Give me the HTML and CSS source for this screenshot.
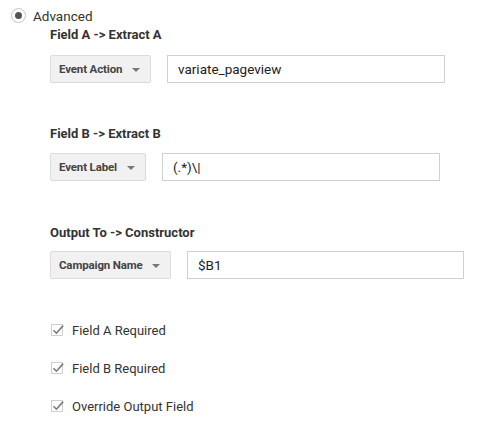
FILE: index.html
```html
<!DOCTYPE html>
<html>
<head>
<meta charset="utf-8">
<link rel="stylesheet" href="styles.css">
</head>
<body>
<div class="radio-row">
  <span class="radio"><span class="radio-dot"></span></span>
  <span class="radio-label">Advanced</span>
</div>
<div class="panel">
  <div class="group g1">
    <div class="heading">Field A -&gt; Extract A</div>
    <div class="field-row">
      <div class="select w1"><span class="select-text">Event Action</span><span class="caret"></span></div>
      <div class="input i1">variate_pageview</div>
    </div>
  </div>
  <div class="group g2">
    <div class="heading">Field B -&gt; Extract B</div>
    <div class="field-row">
      <div class="select w2"><span class="select-text">Event Label</span><span class="caret"></span></div>
      <div class="input i2">(.*)\|</div>
    </div>
  </div>
  <div class="group g3">
    <div class="heading">Output To -&gt; Constructor</div>
    <div class="field-row">
      <div class="select w3"><span class="select-text">Campaign Name</span><span class="caret"></span></div>
      <div class="input i3">$B1</div>
    </div>
  </div>
  <div class="checks">
    <label class="check"><span class="box"><svg width="14" height="14" viewBox="0 0 14 14"><path d="M2.5 7.3 L5.4 10.2 L12.2 2.6" fill="none" stroke="#7a7a7a" stroke-width="1.6"/></svg></span><span>Field A Required</span></label>
    <label class="check"><span class="box"><svg width="14" height="14" viewBox="0 0 14 14"><path d="M2.5 7.3 L5.4 10.2 L12.2 2.6" fill="none" stroke="#7a7a7a" stroke-width="1.6"/></svg></span><span>Field B Required</span></label>
    <label class="check"><span class="box"><svg width="14" height="14" viewBox="0 0 14 14"><path d="M2.5 7.3 L5.4 10.2 L12.2 2.6" fill="none" stroke="#7a7a7a" stroke-width="1.6"/></svg></span><span>Override Output Field</span></label>
  </div>
</div>
</body>
</html>
```
FILE: styles.css
```css
html, body {
  margin: 0;
  padding: 0;
  background: #fff;
}
body {
  font-family: Roboto, "Liberation Sans", Arial, sans-serif;
  color: #333;
  width: 482px;
  height: 421px;
  overflow: hidden;
}
.radio-row {
  display: flex;
  align-items: center;
  gap: 7px;
  margin: 8px 0 0 11px;
  height: 15px;
}
.radio {
  box-sizing: border-box;
  width: 15px;
  height: 15px;
  border: 1px solid #c6c6c6;
  border-radius: 50%;
  display: flex;
  align-items: center;
  justify-content: center;
}
.radio-dot {
  width: 7px;
  height: 7px;
  border-radius: 50%;
  background: #555;
}
.radio-label {
  font-size: 13.5px;
  color: #333;
}
.panel {
  margin-left: 50px;
}
.heading {
  font-size: 13px;
  font-weight: 700;
  color: #333;
  line-height: 16px;
}
.g1 { margin-top: 4px; }
.g2 { margin-top: 43px; }
.g3 { margin-top: 44px; }
.field-row {
  display: flex;
  align-items: center;
}
.g1 .field-row { margin-top: 12px; }
.g2 .field-row { margin-top: 11px; }
.g3 .field-row { margin-top: 10px; }
.select {
  box-sizing: border-box;
  height: 28px;
  background: #f1f1f1;
  border: 1px solid #dcdcdc;
  border-radius: 2px;
  display: flex;
  align-items: center;
  padding-left: 8px;
  font-size: 11.5px;
  letter-spacing: -0.15px;
  font-weight: 700;
  color: #444;
}
.select-text { flex: 1; }
.caret {
  width: 0;
  height: 0;
  border-left: 4px solid transparent;
  border-right: 4px solid transparent;
  border-top: 4px solid #777;
  margin-right: 10px;
  margin-top: 1px;
}
.w1 { width: 101px; }
.w2 { width: 96px; }
.w3 { width: 121px; }
.input {
  box-sizing: border-box;
  height: 28px;
  border: 1px solid #d0d0d0;
  background: #fff;
  display: flex;
  align-items: center;
  padding-left: 10px;
  font-size: 13.5px;
  color: #222;
}
.i1 { margin-left: 16px; width: 278px; }
.i2 { margin-left: 16px; width: 278px; }
.i3 { margin-left: 16px; width: 277px; }
.checks {
  margin-top: 43px;
  display: flex;
  flex-direction: column;
  gap: 22px;
}
.check {
  display: flex;
  align-items: center;
  gap: 9px;
  font-size: 13px;
  color: #333;
  height: 16px;
}
.box {
  position: relative;
  box-sizing: border-box;
  width: 12px;
  height: 12px;
  border: 1px solid #cfcfcf;
  margin-left: 1px;
}
.box svg {
  display: block;
  position: absolute;
  left: -1px;
  top: -2px;
}
```
